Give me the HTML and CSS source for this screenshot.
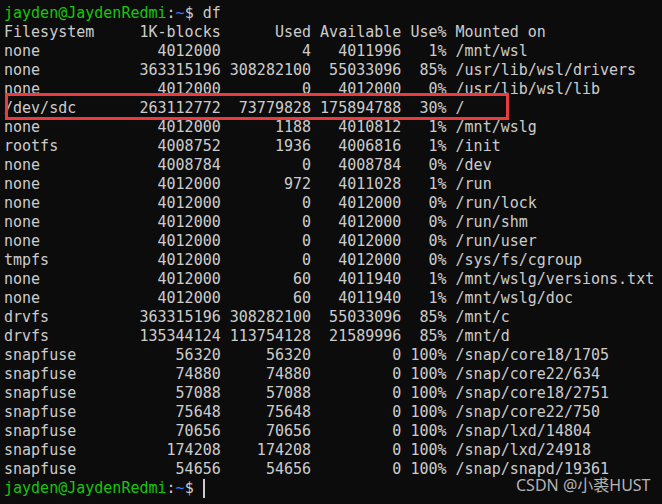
FILE: index.html
```html
<!DOCTYPE html>
<html lang="en">
<head>
    <meta charset="UTF-8">
    <meta name="viewport" content="width=device-width, initial-scale=1.0">
    <title>df - jayden@JaydenRedmi</title>
    <link rel="stylesheet" href="styles.css">
</head>
<body>
    <div class="terminal">
<pre class="output"><span class="user">jayden@JaydenRedmi</span>:<span class="path">~</span>$ df
Filesystem     1K-blocks      Used Available Use% Mounted on
none             4012000         4   4011996   1% /mnt/wsl
none           363315196 308282100  55033096  85% /usr/lib/wsl/drivers
none             4012000         0   4012000   0% /usr/lib/wsl/lib
/dev/sdc       263112772  73779828 175894788  30% /
none             4012000      1188   4010812   1% /mnt/wslg
rootfs           4008752      1936   4006816   1% /init
none             4008784         0   4008784   0% /dev
none             4012000       972   4011028   1% /run
none             4012000         0   4012000   0% /run/lock
none             4012000         0   4012000   0% /run/shm
none             4012000         0   4012000   0% /run/user
tmpfs            4012000         0   4012000   0% /sys/fs/cgroup
none             4012000        60   4011940   1% /mnt/wslg/versions.txt
none             4012000        60   4011940   1% /mnt/wslg/doc
drvfs          363315196 308282100  55033096  85% /mnt/c
drvfs          135344124 113754128  21589996  85% /mnt/d
snapfuse           56320     56320         0 100% /snap/core18/1705
snapfuse           74880     74880         0 100% /snap/core22/634
snapfuse           57088     57088         0 100% /snap/core18/2751
snapfuse           75648     75648         0 100% /snap/core22/750
snapfuse           70656     70656         0 100% /snap/lxd/14804
snapfuse          174208    174208         0 100% /snap/lxd/24918
snapfuse           54656     54656         0 100% /snap/snapd/19361
<span class="user">jayden@JaydenRedmi</span>:<span class="path">~</span>$ <span class="cursor"></span></pre>
        <div class="highlight"></div>
        <div class="watermark">CSDN @小裘HUST</div>
    </div>
</body>
</html>
```

FILE: styles.css
```css
html,
body {
    margin: 0;
    padding: 0;
    background-color: #0c0c0c;
}

.terminal {
    position: relative;
    width: 662px;
    height: 504px;
    overflow: hidden;
    background-color: #0c0c0c;
}

.output {
    margin: 0;
    padding: 4px 0 0 4px;
    font-family: "DejaVu Sans Mono", "Liberation Mono", monospace;
    font-size: 15px;
    line-height: 19px;
    color: #cccccc;
}

.user {
    color: #16c60c;
}

.path {
    color: #3b78ff;
}

.cursor {
    display: inline-block;
    width: 0;
    height: 19px;
    border-left: 2px solid #cccccc;
    vertical-align: top;
}

/* red annotation around the root filesystem row */
.highlight {
    position: absolute;
    left: 5px;
    top: 93px;
    width: 498px;
    height: 21px;
    border: 3px solid #ea3b3f;
}

.watermark {
    position: absolute;
    left: 516px;
    top: 475px;
    white-space: nowrap;
    font-family: "Noto Sans", "Noto Sans CJK SC", sans-serif;
    font-size: 16px;
    line-height: 20px;
    color: #b4b4b4;
}
```
